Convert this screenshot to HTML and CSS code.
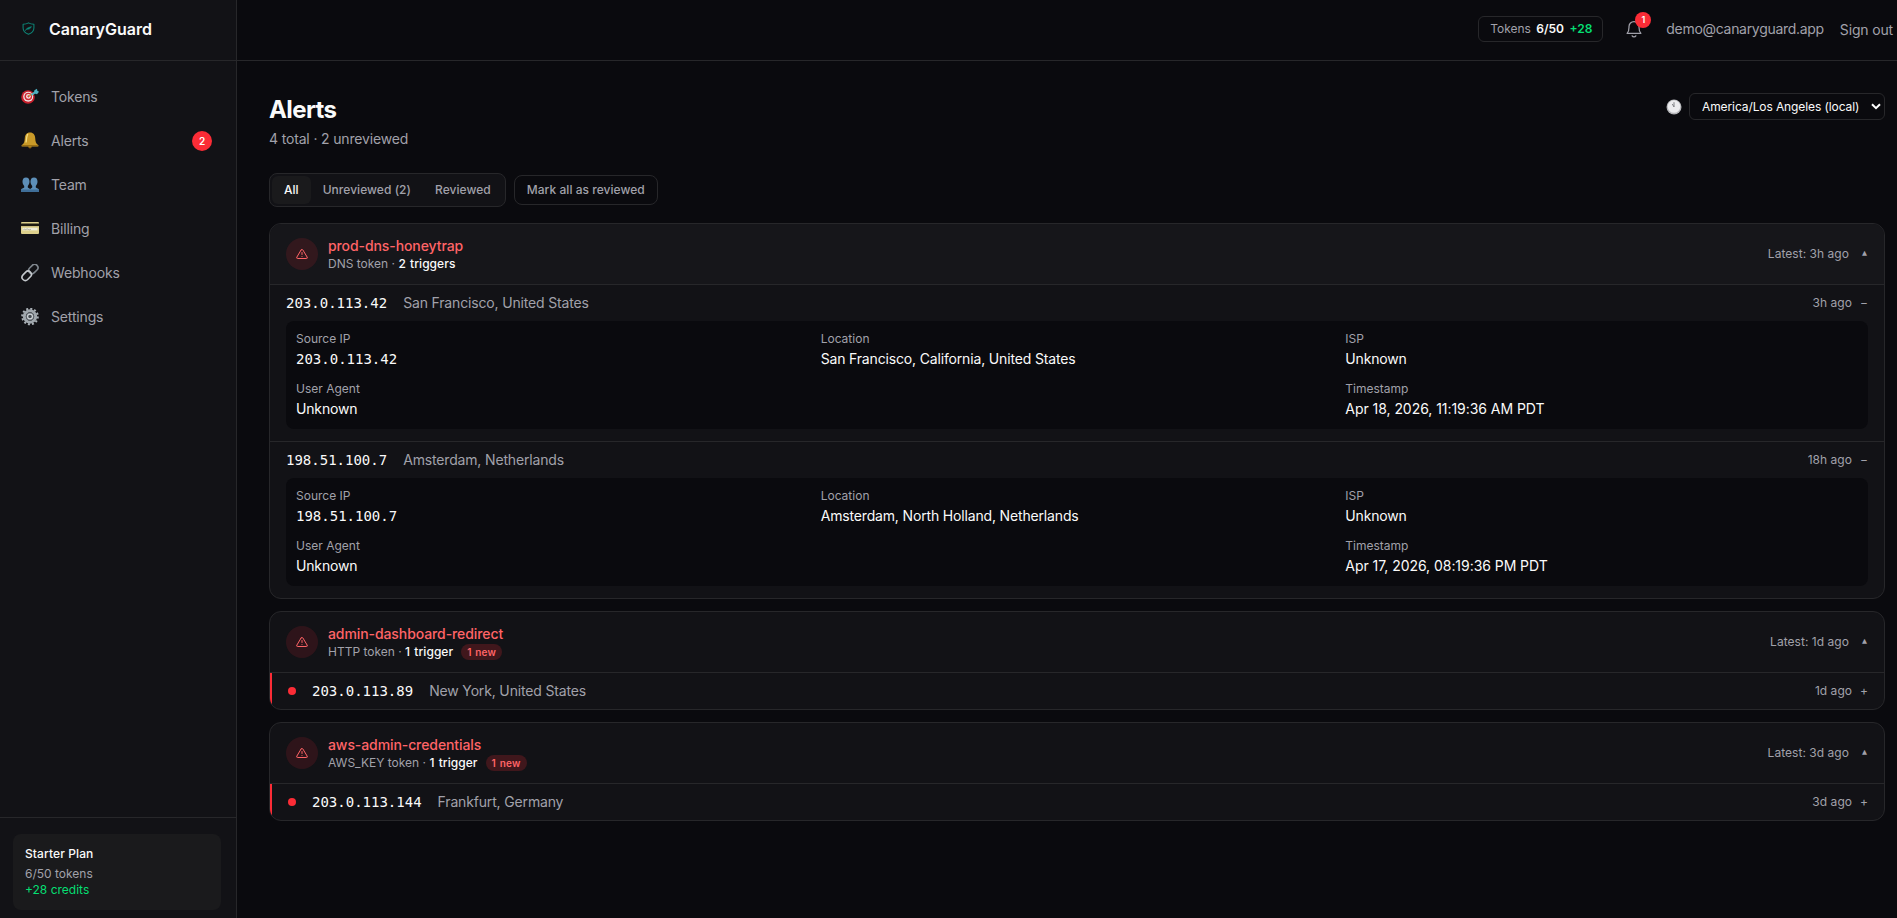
FILE: index.html
```
<!DOCTYPE html>
<html lang="en">
<head>
  <meta charset="UTF-8">
  <title>Alerts - CanaryGuard</title>
  <link rel="stylesheet" href="styles.css">
</head>
<body>
  <aside class="sidebar">
    <div class="brand">
      <svg class="brand-icon" viewBox="0 0 24 24" fill="none" stroke="#0d8577" stroke-width="1.9" stroke-linecap="round" stroke-linejoin="round">
        <path d="M12 1.500c3 2 6 2.600 10 2.600v7c0 5.500-4 9.400-10 11.600C6 20.500 2 16.600 2 11.100v-7c4 0 7-.6 10-2.600z"/>
        <path d="M6.500 15.500c1.500-4 4.500-5 11-7-2 4.500-4.500 5-9 5z" fill="#0d8577" stroke-width="1"/>
      </svg>
      <span class="brand-name">CanaryGuard</span>
    </div>
    <nav class="nav">
      <a class="nav-item">
        <svg class="nav-icon" viewBox="0 0 18 18">
          <circle cx="7" cy="9" r="6.800" fill="#c8202c"/>
          <circle cx="7.200" cy="8.700" r="5" fill="#f1e4e4"/>
          <circle cx="7.300" cy="8.500" r="3.800" fill="#cf2a35"/>
          <circle cx="7.400" cy="8.400" r="2.400" fill="#f1e4e4"/>
          <circle cx="7.500" cy="8.300" r="1.100" fill="#cf2a35"/>
          <path d="M7.500 8.300L13 5" stroke="#c9a13b" stroke-width="1.200"/>
          <path d="M10.500 6.800l4-2.600" stroke="#4fb0c0" stroke-width="2"/>
          <path d="M13 5.200l.4-3L16 .8l.3 2 1.700.9-2 2.500z" fill="#4fb0c0"/>
        </svg>
        <span>Tokens</span>
      </a>
      <a class="nav-item">
        <svg class="nav-icon" viewBox="0 0 18 18">
          <circle cx="9" cy="14.800" r="1.700" fill="#8c6412"/>
          <path d="M9 .5c3.400 0 5 2.400 5.200 5.500.2 3.500.6 5.500 2.900 7 .8.700.5 1.600-.6 1.600h-15c-1.100 0-1.400-.9-.6-1.600 2.300-1.500 2.700-3.500 2.900-7C4 2.900 5.600.5 9 .5z" fill="#c99a28"/>
          <path d="M7 2.100c-1.500 1.300-1.400 5-2 8.400" stroke="#f6dd80" stroke-width="1.300" fill="none"/>
          <path d="M1.200 13.500h15.600" stroke="#94690f" stroke-width=".9"/>
        </svg>
        <span>Alerts</span>
        <span class="nav-badge">2</span>
      </a>
      <a class="nav-item">
        <svg class="nav-icon" viewBox="0 0 18 18" fill="#5d8fb9">
          <path d="M5 1.500c2.300 0 3.500 1.600 3.500 4.100 0 2-.8 3.400-1.700 4.300v1.500c.8.700 2.600.9 2.600 2.600v2H0v-2c0-1.700 2.400-1.900 3.200-2.600V9.900C2.300 9 1.500 7.600 1.500 5.600 1.500 3.100 2.700 1.500 5 1.500z"/>
          <path d="M13 1.500c2.300 0 3.500 1.600 3.500 4.100 0 2-.8 3.400-1.700 4.300v1.500c.8.700 3.200.9 3.200 2.600v2H9v-2c0-1.700 1.400-1.900 2.200-2.600V9.900c-.9-.9-1.700-2.300-1.700-4.300 0-2.500 1.200-4.100 3.500-4.100z"/>
          <path d="M0 13.500h18V16H0z" fill="#3f6e98"/>
        </svg>
        <span>Team</span>
      </a>
      <a class="nav-item">
        <svg class="nav-icon" viewBox="0 0 18 18">
          <rect y="2" width="18" height="12" rx="1" fill="#ddd08c"/>
          <rect y="3.500" width="18" height="2.600" fill="#1d1a12"/>
          <rect x="1.500" y="7.800" width="15" height="2.600" fill="#efedda"/>
          <path d="M2.500 9.500c1-1 1.500.6 2.500 0s1.500-.6 2.500 0 1.500 0 2.500-.2" stroke="#8b8b7a" stroke-width=".6" fill="none"/>
        </svg>
        <span>Billing</span>
      </a>
      <a class="nav-item">
        <svg class="nav-icon" viewBox="0 0 18 18" fill="none">
          <rect x="-5.200" y="-3.300" width="10.400" height="6.600" rx="3.300" transform="translate(12.300 5) rotate(-45)" stroke="#7f868d" stroke-width="1.600"/>
          <rect x="-5.200" y="-3.300" width="10.400" height="6.600" rx="3.300" transform="translate(5.700 11.800) rotate(-45)" stroke="#c3c7cb" stroke-width="1.600"/>
        </svg>
        <span>Webhooks</span>
      </a>
      <a class="nav-item">
        <svg class="nav-icon" viewBox="0 0 18 18" fill="none">
          <circle cx="9" cy="8.500" r="7.800" stroke="#a9b0b6" stroke-width="2" stroke-dasharray="2.040 2.040"/>
          <circle cx="9" cy="8.500" r="5.700" stroke="#a0a7ad" stroke-width="3"/>
          <circle cx="9" cy="8.500" r="4" fill="#697077"/>
          <circle cx="9" cy="8.500" r="2.400" fill="#454b51" stroke="#d0d5d9" stroke-width="1.200"/>
        </svg>
        <span>Settings</span>
      </a>
    </nav>
    <div class="plan">
      <div class="plan-box">
        <div class="plan-name">Starter Plan</div>
        <div>6/50 tokens</div>
        <div class="green">+28 credits</div>
      </div>
    </div>
  </aside>

  <div class="page">
    <header class="topbar">
      <div class="token-pill">Tokens <b>6/50</b> <b class="green">+28</b></div>
      <div class="bell">
        <svg width="20" height="20" viewBox="0 0 24 24" fill="none" stroke="#a1a1aa" stroke-width="1.500" stroke-linecap="round" stroke-linejoin="round">
          <path d="M18.500 17.200H5.500M3.700 17.200h16.600c-1.500-1.500-2.300-3.600-2.300-7.400V9A6 6 0 006 9v.8c0 3.800-.8 5.900-2.300 7.400z"/>
          <path d="M9.800 20.200a2.500 2.500 0 004.400 0"/>
        </svg>
        <span class="bell-count">1</span>
      </div>
      <span class="email">demo@canaryguard.app</span>
      <a class="sign-out">Sign out</a>
    </header>

    <main class="main">
      <div class="title-row">
        <div>
          <h1>Alerts</h1>
          <p class="subtitle">4 total · 2 unreviewed</p>
        </div>
        <div class="timezone">
          <svg width="16" height="16" viewBox="0 0 16 16">
            <circle cx="8" cy="8" r="7.500" fill="#b4b5b8"/>
            <circle cx="8" cy="7.500" r="6.300" fill="#ececee"/>
            <path d="M8 8V3.200M8 8L6.300 5" stroke="#77787c" stroke-width=".9"/>
          </svg>
          <div class="select">
            <span>America/Los Angeles (local)</span>
            <svg width="10" height="7" viewBox="0 0 10 7" fill="none" stroke="#fff" stroke-width="2"><path d="M1 1.200l4 4 4-4"/></svg>
          </div>
        </div>
      </div>

      <div class="filters">
        <div class="tabs">
          <button class="tab active">All</button>
          <button class="tab">Unreviewed (2)</button>
          <button class="tab">Reviewed</button>
        </div>
        <button class="mark-all">Mark all as reviewed</button>
      </div>

      <section class="card">
        <div class="card-head hovered">
          <div class="alert-icon">
            <svg width="12" height="12" viewBox="0 0 24 24" fill="none" stroke="currentColor" stroke-width="2" stroke-linecap="round" stroke-linejoin="round"><path d="M12 9v4m0 4h.01M10.290 3.860L1.820 18a2 2 0 001.710 3h16.940a2 2 0 001.710-3L13.710 3.860a2 2 0 00-3.420 0z"/></svg>
          </div>
          <div>
            <div class="token-name">prod-dns-honeytrap</div>
            <div class="token-meta">DNS token · <b>2 triggers</b></div>
          </div>
          <div class="latest">Latest: 3h ago <span class="arrow">▲</span></div>
        </div>
        <div class="row">
          <span class="ip">203.0.113.42</span>
          <span class="place">San Francisco, United States</span>
          <span class="ago">3h ago <span>−</span></span>
        </div>
        <div class="detail">
          <div><label>Source IP</label><p class="ip">203.0.113.42</p></div>
          <div><label>Location</label><p>San Francisco, California, United States</p></div>
          <div><label>ISP</label><p>Unknown</p></div>
          <div class="wide"><label>User Agent</label><p>Unknown</p></div>
          <div><label>Timestamp</label><p class="time">Apr 18, 2026, 11:19:36 AM PDT</p></div>
        </div>
        <div class="row divided">
          <span class="ip">198.51.100.7</span>
          <span class="place">Amsterdam, Netherlands</span>
          <span class="ago">18h ago <span>−</span></span>
        </div>
        <div class="detail">
          <div><label>Source IP</label><p class="ip">198.51.100.7</p></div>
          <div><label>Location</label><p>Amsterdam, North Holland, Netherlands</p></div>
          <div><label>ISP</label><p>Unknown</p></div>
          <div class="wide"><label>User Agent</label><p>Unknown</p></div>
          <div><label>Timestamp</label><p class="time">Apr 17, 2026, 08:19:36 PM PDT</p></div>
        </div>
      </section>

      <section class="card">
        <div class="card-head">
          <div class="alert-icon">
            <svg width="12" height="12" viewBox="0 0 24 24" fill="none" stroke="currentColor" stroke-width="2" stroke-linecap="round" stroke-linejoin="round"><path d="M12 9v4m0 4h.01M10.290 3.860L1.820 18a2 2 0 001.710 3h16.940a2 2 0 001.710-3L13.710 3.860a2 2 0 00-3.420 0z"/></svg>
          </div>
          <div>
            <div class="token-name">admin-dashboard-redirect</div>
            <div class="token-meta">HTTP token · <b>1 trigger</b><span class="new">1 new</span></div>
          </div>
          <div class="latest">Latest: 1d ago <span class="arrow">▲</span></div>
        </div>
        <div class="row unread">
          <span class="dot"></span>
          <span class="ip">203.0.113.89</span>
          <span class="place">New York, United States</span>
          <span class="ago">1d ago <span>+</span></span>
        </div>
      </section>

      <section class="card">
        <div class="card-head">
          <div class="alert-icon">
            <svg width="12" height="12" viewBox="0 0 24 24" fill="none" stroke="currentColor" stroke-width="2" stroke-linecap="round" stroke-linejoin="round"><path d="M12 9v4m0 4h.01M10.290 3.860L1.820 18a2 2 0 001.710 3h16.940a2 2 0 001.710-3L13.710 3.860a2 2 0 00-3.420 0z"/></svg>
          </div>
          <div>
            <div class="token-name">aws-admin-credentials</div>
            <div class="token-meta">AWS_KEY token · <b>1 trigger</b><span class="new">1 new</span></div>
          </div>
          <div class="latest">Latest: 3d ago <span class="arrow">▲</span></div>
        </div>
        <div class="row unread">
          <span class="dot"></span>
          <span class="ip">203.0.113.144</span>
          <span class="place">Frankfurt, Germany</span>
          <span class="ago">3d ago <span>+</span></span>
        </div>
      </section>
    </main>
  </div>
</body>
</html>
```
FILE: styles.css
```
* {
  box-sizing: border-box;
}
body {
  display: flex;
  height: 100vh;
  margin: 0;
  overflow: hidden;
  font-family: Inter, "Liberation Sans", sans-serif;
  font-size: 14px;
  line-height: 20px;
  letter-spacing: -0.16px;
  color: #fafafa;
  background: #0a0a0e;
}
h1, p {
  margin: 0;
}
b {
  font-weight: 500;
  color: #fafafa;
}
button {
  font: inherit;
}
svg {
  display: block;
  flex: none;
}
.green {
  color: #05df72;
}

/* sidebar */
.sidebar {
  display: flex;
  flex-direction: column;
  flex: none;
  width: 237px;
  background: #121216;
  border-right: 1px solid #27272a;
}
.brand {
  display: flex;
  align-items: center;
  gap: 14px;
  height: 61px;
  padding: 0 22px 3px;
  border-bottom: 1px solid #27272a;
}
.brand-icon {
  width: 13px;
  height: 13px;
}
.brand-name {
  font-size: 16px;
  font-weight: 600;
  letter-spacing: 0;
}
.nav {
  display: flex;
  flex-direction: column;
  flex: 1;
  gap: 4px;
  padding: 16px 12px;
}
.nav-item {
  display: flex;
  align-items: center;
  gap: 12px;
  height: 40px;
  padding: 0 12px 0 9px;
  color: #a1a1aa;
}
.nav-icon {
  width: 18px;
  height: 18px;
}
.nav-badge {
  width: 20px;
  height: 20px;
  margin-left: auto;
  border-radius: 50%;
  font-size: 10px;
  font-weight: 600;
  letter-spacing: 0;
  text-align: center;
  color: #fff;
  background: #fb2c36;
}
.plan {
  padding: 16px 15px 8px 13px;
  border-top: 1px solid #27272a;
}
.plan-box {
  padding: 12px;
  border-radius: 8px;
  font-size: 12px;
  line-height: 16px;
  letter-spacing: 0;
  color: #a1a1aa;
  background: #1a1a1c;
}
.plan-name {
  margin-bottom: 4px;
  font-weight: 500;
  letter-spacing: 0.1px;
  color: #fafafa;
}

/* top bar */
.page {
  flex: 1;
  min-width: 0;
}
.topbar {
  display: flex;
  align-items: center;
  justify-content: flex-end;
  height: 61px;
  padding: 0 4px 2px 0;
  border-bottom: 1px solid #27272a;
  color: #a1a1aa;
}
.token-pill {
  height: 26px;
  padding: 4px 10px 4px 11px;
  border: 1px solid #27272a;
  border-radius: 6px;
  font-size: 12px;
  line-height: 16px;
  letter-spacing: 0;
  word-spacing: 2px;
}
.token-pill b {
  font-weight: 600;
}
.token-pill .green {
  color: #05df72;
}
.bell {
  position: relative;
  margin: 0 22px 0 21px;
}
.bell-count {
  position: absolute;
  top: -7px;
  right: -7px;
  width: 16px;
  height: 16px;
  border-radius: 50%;
  font-size: 9px;
  font-weight: 600;
  line-height: 16px;
  text-align: center;
  color: #fff;
  background: #fb2c36;
}
.email {
  letter-spacing: -0.3px;
}
.sign-out {
  margin-left: 16px;
  padding-top: 2px;
}

/* content */
.main {
  padding: 32px 12px 32px 32px;
}
.title-row {
  display: flex;
  justify-content: space-between;
}
h1 {
  padding-top: 1px;
  font-size: 24px;
  font-weight: 700;
  line-height: 32px;
  letter-spacing: -0.6px;
}
.subtitle {
  margin-top: 3px;
  color: #a1a1aa;
}
.timezone {
  display: flex;
  align-items: center;
  gap: 7px;
  height: 27px;
}
.select {
  display: flex;
  align-items: center;
  justify-content: space-between;
  width: 196px;
  height: 27px;
  padding: 0 3px 0 12px;
  border: 1px solid #27272a;
  border-radius: 6px;
  font-size: 12px;
  letter-spacing: -0.1px;
}
.filters {
  display: flex;
  align-items: center;
  gap: 8px;
  margin: 24px 0 16px;
}
.tabs {
  display: flex;
  padding: 2px;
  border: 1px solid #27272a;
  border-radius: 8px;
  background: #121216;
}
.tab, .mark-all {
  padding: 6px 12px;
  border: 0;
  border-radius: 6px;
  font-size: 12px;
  font-weight: 500;
  line-height: 16px;
  letter-spacing: 0.04px;
  color: #a1a1aa;
  background: none;
}
.tab.active {
  color: #fafafa;
  background: #1a1a1c;
}
.mark-all {
  border: 1px solid #27272a;
  border-radius: 8px;
}

/* alert groups */
.card {
  margin-bottom: 12px;
  overflow: hidden;
  border: 1px solid #27272a;
  border-radius: 12px;
  background: #121216;
}
.card-head {
  display: flex;
  align-items: center;
  gap: 10px;
  padding: 12px 16px;
  border-bottom: 1px solid #27272a;
}
.card-head.hovered {
  background: #16161a;
}
.alert-icon {
  display: flex;
  align-items: center;
  justify-content: center;
  width: 32px;
  height: 32px;
  padding-bottom: 1px;
  border-radius: 50%;
  color: #ff6467;
  background: rgba(251, 44, 54, 0.12);
}
.token-name {
  font-weight: 500;
  letter-spacing: -0.09px;
  color: #ff6467;
}
.token-meta {
  display: flex;
  align-items: center;
  height: 16px;
  font-size: 12px;
  letter-spacing: 0;
  white-space: pre;
  color: #a1a1aa;
}
.token-meta b {
  letter-spacing: 0.05px;
  word-spacing: 1px;
}
.new {
  margin-left: 8px;
  padding: 0 6px;
  border-radius: 8px;
  font-size: 10px;
  font-weight: 600;
  line-height: 16px;
  letter-spacing: 0.2px;
  word-spacing: 1px;
  color: #ff6467;
  background: rgba(251, 44, 54, 0.2);
}
.latest, .ago {
  display: flex;
  align-items: center;
  gap: 12px;
  margin-left: auto;
  font-size: 12px;
  letter-spacing: 0.04px;
  color: #a1a1aa;
}
.ago {
  gap: 8px;
}
.arrow {
  width: 7px;
  padding-bottom: 3px;
  font-family: "DejaVu Sans", sans-serif;
  font-size: 6.5px;
  text-align: center;
}
.row {
  display: flex;
  align-items: center;
  gap: 16px;
  padding: 8px 16px;
}
.row.divided {
  border-top: 1px solid #27272a;
}
.row.unread {
  border-left: 2px solid #fb2c36;
}
.dot {
  width: 8px;
  height: 8px;
  border-radius: 50%;
  background: #fb2c36;
}
.ip {
  font-family: "DejaVu Sans Mono", monospace;
  letter-spacing: 0;
}
.place {
  color: #a1a1aa;
}
.detail {
  display: grid;
  grid-template-columns: repeat(3, 1fr);
  gap: 12px;
  margin: 0 16px 12px;
  padding: 10px;
  border-radius: 8px;
  background: #0a0a0e;
}
.detail .wide {
  grid-column: span 2;
}
.detail label {
  display: block;
  margin-bottom: 2px;
  font-size: 12px;
  line-height: 16px;
  letter-spacing: 0;
  color: #a1a1aa;
}
.detail .time {
  letter-spacing: -0.05px;
}
```
